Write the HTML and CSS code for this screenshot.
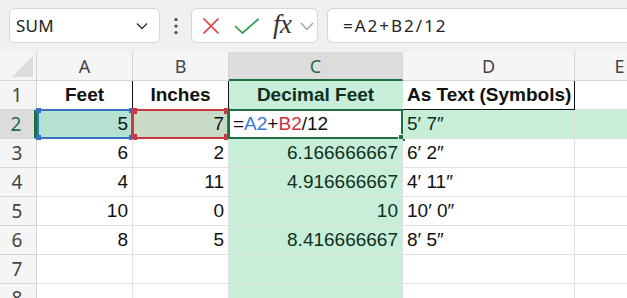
FILE: index.html
```html
<!DOCTYPE html>
<html>
<head>
<meta charset="utf-8">
<link rel="stylesheet" href="styles.css">
</head>
<body>
<div class="app">
  <div class="toolbar">
    <div class="namebox">
      <span class="nb-text">SUM</span>
      <svg class="nb-chev" width="12" height="8" viewBox="0 0 12 8"><path d="M1 1.5 L6 6.5 L11 1.5" fill="none" stroke="#333" stroke-width="1.4"/></svg>
    </div>
    <div class="vdots">
      <svg width="6" height="18" viewBox="0 0 6 18"><circle cx="3" cy="2.5" r="1.6" fill="#444"/><circle cx="3" cy="9" r="1.6" fill="#444"/><circle cx="3" cy="15.5" r="1.6" fill="#444"/></svg>
    </div>
    <div class="fxbox">
      <svg class="ic-x" width="18" height="18" viewBox="0 0 18 18"><path d="M1.5 1.5 L16.5 16.5 M16.5 1.5 L1.5 16.5" stroke="#e4393e" stroke-width="1.7" fill="none"/></svg>
      <svg class="ic-ok" width="26" height="16" viewBox="0 0 26 16"><path d="M1 8 L8.5 15 L24.5 1" stroke="#2f9b4a" stroke-width="1.7" fill="none"/></svg>
      <span class="fx">fx</span>
      <svg class="ic-chev" width="14" height="9" viewBox="0 0 14 9"><path d="M1 1 L7 7.5 L13 1" fill="none" stroke="#a0a0a0" stroke-width="1.4"/></svg>
    </div>
    <div class="formula">=A2+B2/12</div>
  </div>

  <div class="sheet">
    <!-- header row -->
    <div class="corner"><span class="tri"></span></div>
    <div class="ch">A</div>
    <div class="ch">B</div>
    <div class="ch ch-sel">C</div>
    <div class="ch">D</div>
    <div class="ch">E</div>

    <!-- row 1 -->
    <div class="rh">1</div>
    <div class="c hd ctr">Feet</div>
    <div class="c hd ctr">Inches</div>
    <div class="c hd ctr gr">Decimal Feet</div>
    <div class="c hd">As Text (Symbols)</div>
    <div class="c"></div>

    <!-- row 2 -->
    <div class="rh rh-sel">2</div>
    <div class="c num a2">5<span class="rng rng-blue"><i class="h tl"></i><i class="h tr"></i><i class="h bl"></i><i class="h br"></i></span></div>
    <div class="c num b2">7<span class="rng rng-red"><i class="h tl"></i><i class="h tr"></i><i class="h bl"></i><i class="h br"></i></span></div>
    <div class="c edit">=<span class="ref-a">A2</span>+<span class="ref-b">B2</span>/12<span class="active"><i class="fill"></i></span></div>
    <div class="c gr txt">5′ 7″</div>
    <div class="c gr"></div>

    <!-- row 3 -->
    <div class="rh">3</div>
    <div class="c num">6</div>
    <div class="c num">2</div>
    <div class="c num gr">6.166666667</div>
    <div class="c txt">6′ 2″</div>
    <div class="c"></div>

    <!-- row 4 -->
    <div class="rh">4</div>
    <div class="c num">4</div>
    <div class="c num">11</div>
    <div class="c num gr">4.916666667</div>
    <div class="c txt">4′ 11″</div>
    <div class="c"></div>

    <!-- row 5 -->
    <div class="rh">5</div>
    <div class="c num">10</div>
    <div class="c num">0</div>
    <div class="c num gr">10</div>
    <div class="c txt">10′ 0″</div>
    <div class="c"></div>

    <!-- row 6 -->
    <div class="rh">6</div>
    <div class="c num">8</div>
    <div class="c num">5</div>
    <div class="c num gr">8.416666667</div>
    <div class="c txt">8′ 5″</div>
    <div class="c"></div>

    <!-- row 7 -->
    <div class="rh">7</div>
    <div class="c"></div>
    <div class="c"></div>
    <div class="c gr"></div>
    <div class="c"></div>
    <div class="c"></div>

    <!-- row 8 -->
    <div class="rh">8</div>
    <div class="c"></div>
    <div class="c"></div>
    <div class="c gr"></div>
    <div class="c"></div>
    <div class="c"></div>
  </div>
</div>
</body>
</html>
```

FILE: styles.css
```css
* { box-sizing: border-box; }
html, body { margin: 0; padding: 0; }
body {
  width: 627px;
  height: 298px;
  overflow: hidden;
  background: #ffffff;
  font-family: "Liberation Sans", Arial, sans-serif;
}

.app { display: flex; flex-direction: column; }

/* ---------- toolbar ---------- */
.toolbar {
  height: 52px;
  background: #f0f0f0;
  display: flex;
  align-items: flex-start;
  padding: 8px 0 0 9px;
}
.namebox {
  width: 151px;
  height: 35px;
  background: #fff;
  border: 1px solid #d6d6d6;
  border-radius: 6px;
  display: flex;
  align-items: center;
  justify-content: space-between;
  padding: 0 11px 0 6px;
}
.nb-text {
  font-family: "Noto Sans", sans-serif;
  font-size: 17px;
  color: #222;
  letter-spacing: 0.2px;
}
.vdots {
  width: 31px;
  height: 35px;
  display: flex;
  align-items: center;
  justify-content: center;
}
.fxbox {
  width: 127px;
  height: 35px;
  background: #fff;
  border: 1px solid #d6d6d6;
  border-radius: 6px;
  display: flex;
  align-items: center;
  padding-left: 10px;
}
.ic-x { margin-right: 14px; }
.ic-ok { margin-right: 13px; margin-top: 1px; }
.fx {
  font-family: "Liberation Serif", "DejaVu Serif", serif;
  font-style: italic;
  font-size: 27px;
  color: #333;
  line-height: 1;
  margin-right: 8px;
  margin-top: -3px;
  letter-spacing: -0.5px;
}
.ic-chev { margin-top: 1px; }
.formula {
  margin-left: 9px;
  flex: 1;
  height: 35px;
  background: #fff;
  border: 1px solid #d6d6d6;
  border-right: none;
  border-radius: 6px 0 0 6px;
  display: flex;
  align-items: center;
  padding-left: 15px;
  font-family: "Noto Sans", sans-serif;
  font-size: 17px;
  color: #222;
  letter-spacing: 2px;
}

/* ---------- sheet ---------- */
.sheet {
  display: grid;
  grid-template-columns: 37px 96px 96px 174px 172px 90px;
  grid-template-rows: 29px 29px 29px 29px 29px 29px 29px 29px 29px;
  font-family: "Liberation Sans Narrow", "Liberation Sans", sans-serif;
  font-size: 19px;
}
.corner {
  background: #f5f5f5;
  border-right: 1px solid #d4d4d4;
  border-bottom: 1px solid #d4d4d4;
  position: relative;
}
.tri {
  position: absolute;
  right: 3px;
  bottom: 3px;
  width: 0;
  height: 0;
  border-left: 21px solid transparent;
  border-bottom: 21px solid #dcdcdc;
}
.ch {
  background: #f5f5f5;
  border-right: 1px solid #d4d4d4;
  border-bottom: 1px solid #d4d4d4;
  display: flex;
  align-items: center;
  justify-content: center;
  color: #444;
  font-family: "Noto Sans", sans-serif;
  font-size: 18px;
}
.ch-sel {
  background: #dcdcdc;
  color: #1d6f42;
  border-bottom: 2px solid #1d6f42;
}
.rh {
  background: #f5f5f5;
  border-right: 1px solid #d4d4d4;
  border-bottom: 1px solid #d4d4d4;
  display: flex;
  align-items: center;
  justify-content: center;
  color: #444;
  font-family: "Noto Sans", sans-serif;
  font-size: 19px;
  padding-right: 2px;
}
.rh-sel {
  background: #dcdcdc;
  color: #1d6f42;
  border-right: 3px solid #1d6f42;
}
.c {
  position: relative;
  border-right: 1px solid #e0e0e0;
  border-bottom: 1px solid #e0e0e0;
  display: flex;
  align-items: center;
  padding: 0 4px;
  color: #111;
  white-space: nowrap;
}
.hd {
  font-weight: bold;
  border-right-color: #111;
  border-bottom-color: #111;
}
.ctr { justify-content: center; }
.num { justify-content: flex-end; }
.txt { justify-content: flex-start; }
.gr { background: #c6eed8; color: #10301d; }
.gr.hd { border-right-color: #c6eed8; }
.a2 { background: #b5e1d3; }
.b2 { background: #c8dbc6; }
.edit { background: #fff; color: #111; }
.ref-a { color: #3b76d6; }
.ref-b { color: #d0303c; }

/* overlays */
.rng, .active {
  position: absolute;
  left: -1px;
  top: -1px;
  right: -1px;
  bottom: -1px;
  pointer-events: none;
}
.rng-blue { border: 2px solid #3a6fc6; left: 0; }
.rng-red { border: 2px solid #c9393f; }
.active { border: 2px solid #1d6f42; }
.h {
  position: absolute;
  width: 6px;
  height: 6px;
}
.rng-blue .h { background: #3a6fc6; width: 5px; height: 5px; }
.rng-red .h { background: #c9393f; }
.h.tl { left: -3px; top: -3px; }
.h.tr { right: -3px; top: -3px; }
.h.bl { left: -3px; bottom: -3px; }
.h.br { right: -3px; bottom: -3px; }
.fill {
  position: absolute;
  right: -4px;
  bottom: -4px;
  width: 6px;
  height: 6px;
  background: #1d6f42;
  outline: 1px solid #fff;
}
```
